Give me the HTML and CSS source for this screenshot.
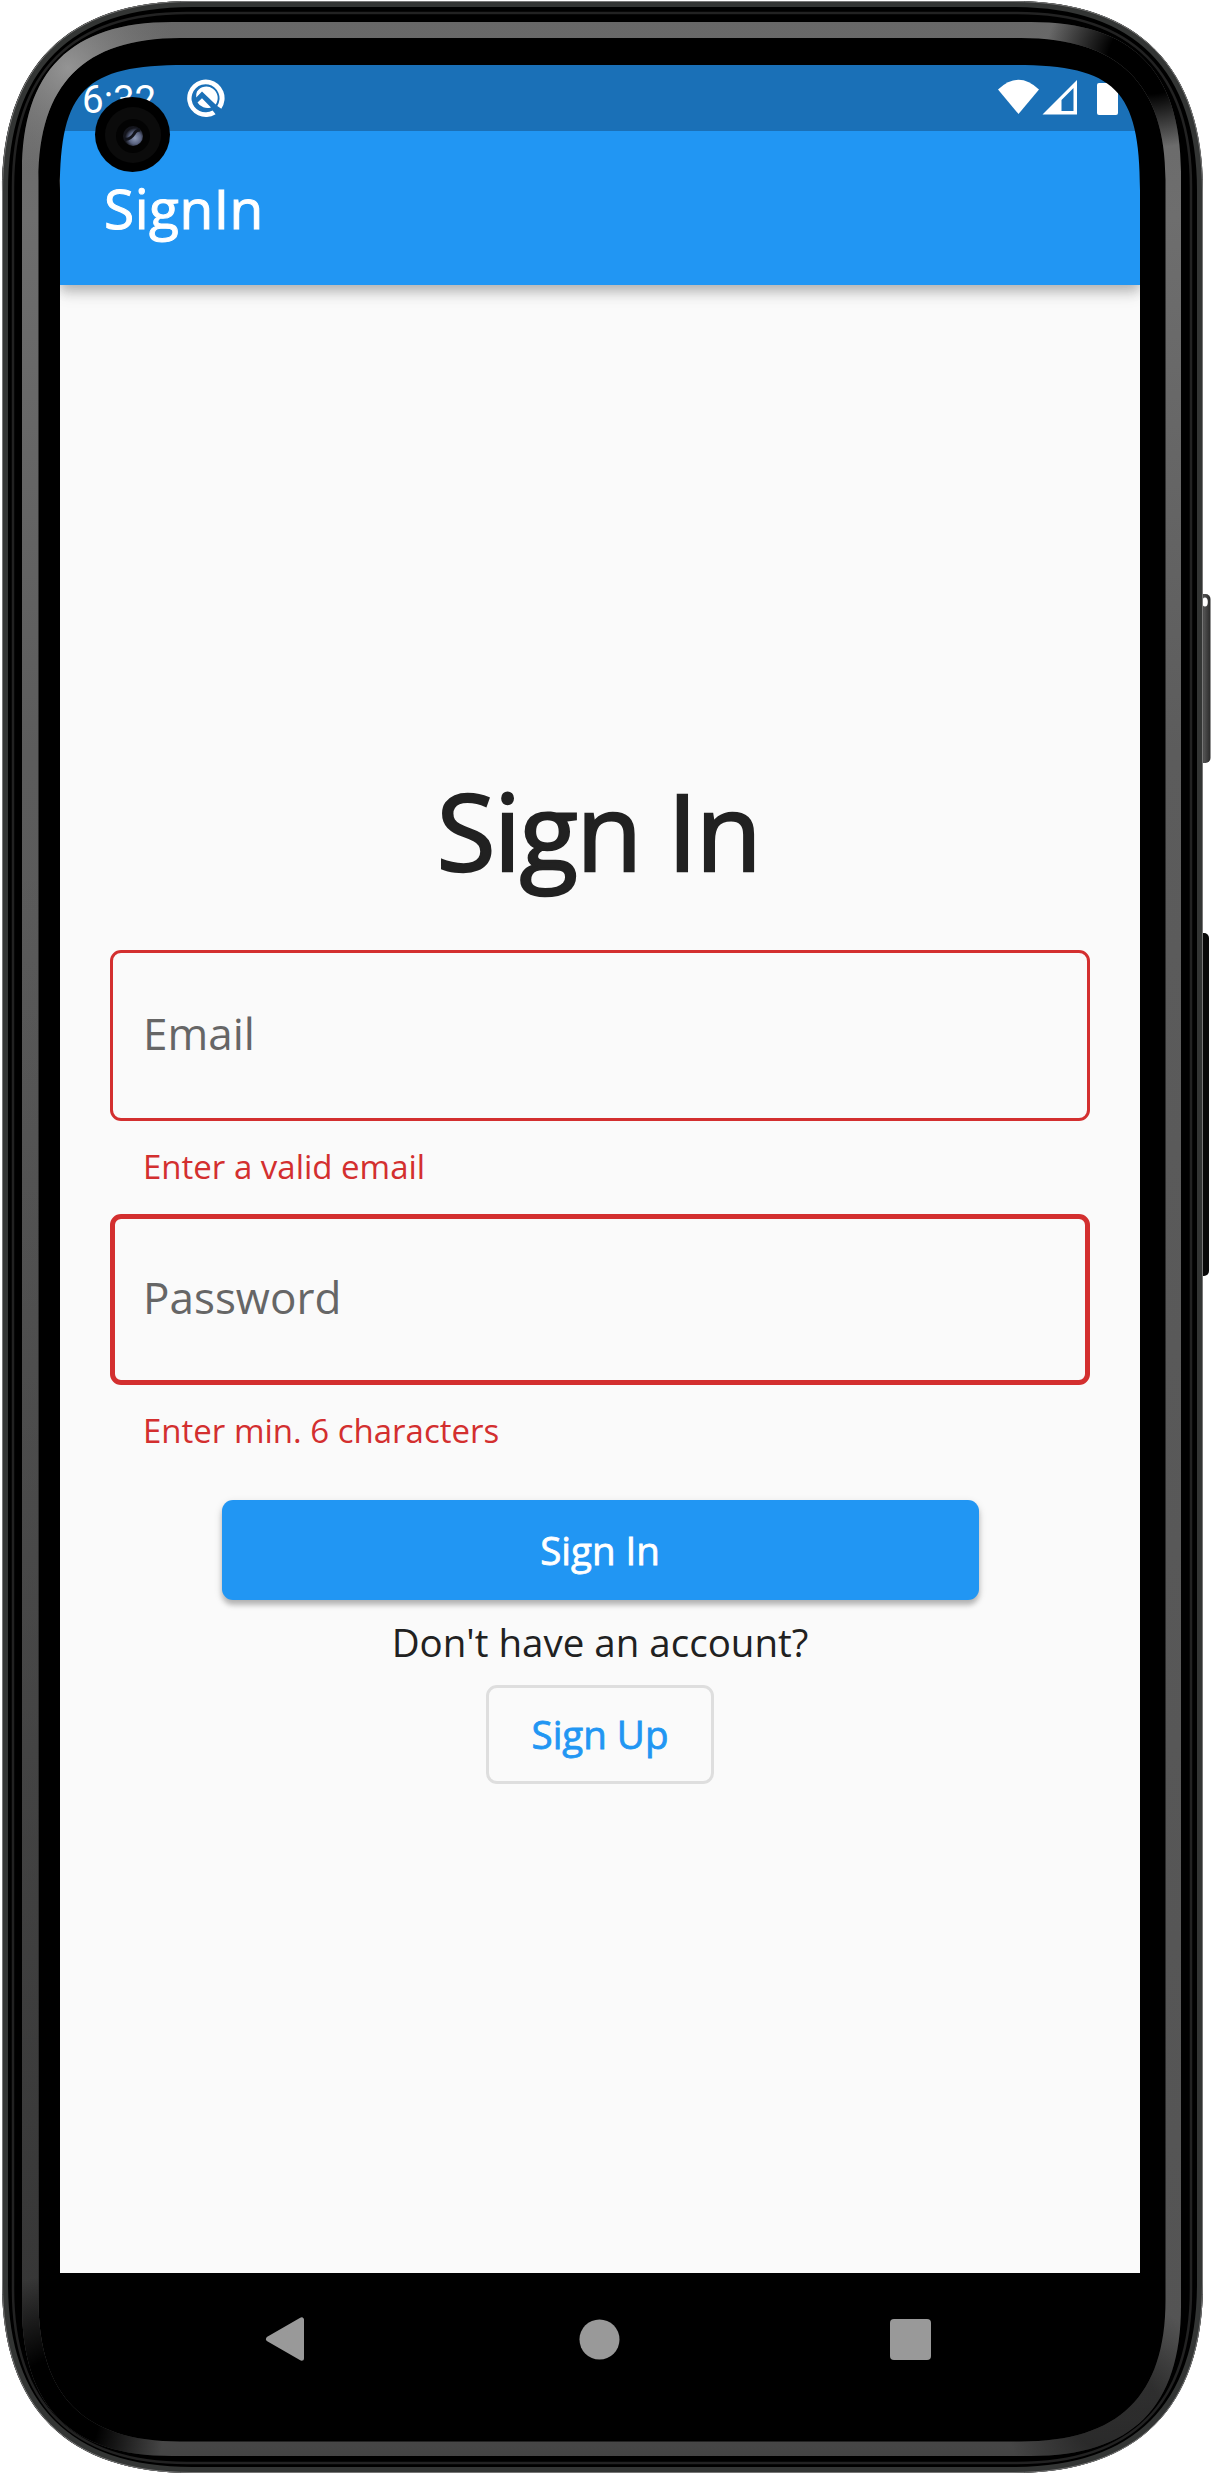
FILE: index.html
```html
<!DOCTYPE html>
<html lang="en">
<head>
<meta charset="utf-8">
<title>SignIn</title>
<link rel="stylesheet" href="styles.css">
</head>
<body>
<div class="phone">
  <div class="screen">
    <header class="status-bar">
      <span class="clock">6:32</span>
      <svg class="q-icon" width="38" height="38" viewBox="0 0 38 38">
        <path d="M28.600 35.200A18.700 18.700 0 1 1 34.300 29.800L30.300 26.900A14 14 0 1 0 25.600 31.400Z" fill="#fff"/>
        <path d="M10 12.400A11.400 11.400 0 0 1 28.600 25.600L15 12.600L9.200 18.400A11 11 0 0 1 10 12.400ZM10.500 23.400L15 19.200L24 28.400A11.400 11.400 0 0 1 10.500 23.400Z" fill="#fff"/>
      </svg>
      <svg class="status-icons" width="122" height="37" viewBox="0 0 122 37">
        <path d="M0 10.500Q20.500-9 41 10.500L20.500 35Z" fill="#fff"/>
        <path fill-rule="evenodd" d="M44.500 35.500L79 1V35.500ZM63.500 21V32H75.500V9Z" fill="#fff"/>
        <rect x="99" y="4" width="21" height="32" rx="2" fill="#fff"/>
      </svg>
    </header>
    <div class="app-bar">SignIn</div>
    <main class="page">
      <h1 class="title">Sign In</h1>
      <form class="form">
        <input class="field" type="text" placeholder="Email">
        <p class="error">Enter a valid email</p>
        <input class="field field-focused" type="password" placeholder="Password">
        <p class="error">Enter min. 6 characters</p>
        <button class="submit" type="button">Sign In</button>
      </form>
      <p class="question">Don't have an account?</p>
      <button class="sign-up" type="button">Sign Up</button>
    </main>
    <nav class="nav-bar">
      <svg width="40" height="46" viewBox="0 0 40 46"><path d="M3.500 23L36.500 3.800V42.200Z" fill="#999" stroke="#999" stroke-width="5" stroke-linejoin="round"/></svg>
      <svg class="home" width="41" height="41" viewBox="0 0 41 41"><circle cx="20.500" cy="20.500" r="20" fill="#999"/></svg>
      <svg width="41" height="41" viewBox="0 0 41 41"><rect width="41" height="41" rx="4" fill="#999"/></svg>
    </nav>
  </div>

  <svg class="bezel" width="1211" height="2474" viewBox="0 0 1211 2474">
    <defs>
      <linearGradient id="rim" x1="0" y1="0" x2="0" y2="1">
        <stop offset="0" stop-color="#686868"/><stop offset=".08" stop-color="#6e6e6e"/>
        <stop offset=".3" stop-color="#5c5c5c"/><stop offset=".95" stop-color="#545454"/><stop offset="1" stop-color="#444"/>
      </linearGradient>
      <linearGradient id="leftShade" x1="0" y1="0" x2="0" y2="1">
        <stop offset=".3" stop-color="#333" stop-opacity="0"/><stop offset="1" stop-color="#303030" stop-opacity=".9"/>
      </linearGradient>
      <radialGradient id="light"><stop offset="0" stop-color="#999" stop-opacity=".9"/><stop offset="1" stop-color="#777" stop-opacity="0"/></radialGradient>
      <radialGradient id="dark"><stop offset=".4" stop-color="#000"/><stop offset="1" stop-color="#000" stop-opacity="0"/></radialGradient>
      <radialGradient id="lens" cx=".6" cy=".6"><stop offset="0" stop-color="#8f9bb8"/><stop offset=".6" stop-color="#5a6380"/><stop offset="1" stop-color="#14151c"/></radialGradient>
      <linearGradient id="key" x1="0" x2="1"><stop offset="0" stop-color="#383838"/><stop offset=".5" stop-color="#505050"/><stop offset="1" stop-color="#2a2a2a"/></linearGradient>
      <clipPath id="rimClip">
        <path clip-rule="evenodd" d="M22 172C22 71 71 22 172 22H1031C1132 22 1181 71 1181 172V2306C1181 2407 1132 2456 1031 2456H172C71 2456 22 2407 22 2306ZM38.500 180C38.500 84 84 38 180 38H1021C1119 38 1165.500 84 1165.500 180V2300C1165.500 2396 1119 2441.500 1021 2441.500H180C84 2441.500 38.500 2396 38.500 2300Z"/>
      </clipPath>
    </defs>
    <rect x="1198" y="594" width="12.500" height="169" rx="5" fill="url(#key)"/>
    <ellipse cx="1205" cy="602" rx="2.800" ry="4.500" fill="#fff"/>
    <rect x="1198" y="933" width="11" height="343" rx="5" fill="#080808"/>
    <path fill-rule="evenodd" d="M2 191C2 66 67 1 192 1H1013C1138 1 1203 66 1203 191V2283C1203 2408 1138 2473 1013 2473H192C67 2473 2 2408 2 2283ZM60 190C60 90 85 65 185 65H1015C1115 65 1140 90 1140 190V2404H60Z"/>
    <g fill="none">
      <path d="M5 191C5 68 69 4 192 4H1013C1136 4 1200 68 1200 191V2283C1200 2406 1136 2470 1013 2470H192C69 2470 5 2406 5 2283Z" stroke="#333534" stroke-width="6"/>
      <path d="M2.500 191C2.500 66.500 67.500 1.500 192 1.500H1013C1138 1.500 1202.500 66.500 1202.500 191V2283C1202.500 2408 1138 2472.500 1013 2472.500H192C67.500 2472.500 2.500 2408 2.500 2283Z" stroke="#777"/>
      <path d="M13 187C13 72 72 13 187 13H1017C1132 13 1191 72 1191 187V2289C1191 2404 1132 2463 1017 2463H187C72 2463 13 2404 13 2289Z" stroke="#222" stroke-width="2.500"/>
    </g>
    <g clip-path="url(#rimClip)">
      <rect x="20" y="20" width="1165" height="2440" fill="url(#rim)"/>
      <rect x="20" y="200" width="60" height="2240" fill="url(#leftShade)"/>
      <ellipse cx="68" cy="68" rx="110" ry="110" fill="url(#light)"/>
      <ellipse cx="1150" cy="58" rx="105" ry="90" fill="url(#dark)"/>
      <ellipse cx="55" cy="2415" rx="110" ry="140" fill="url(#dark)"/>
      <ellipse cx="1115" cy="2410" rx="110" ry="110" fill="url(#dark)" opacity=".4"/>
    </g>
    <circle cx="132.500" cy="134.500" r="37.500"/>
    <circle cx="133" cy="135" r="28" fill="#0b0b0b"/>
    <circle cx="133" cy="136" r="17" fill="#030303"/>
    <circle cx="133" cy="136" r="10" fill="url(#lens)"/>
    <path d="M125 139Q130 140 134 134Q136 130 140 130" fill="none" stroke="#11131b" stroke-width="3"/>
  </svg>
</div>
</body>
</html>
```
FILE: styles.css
```css
* { box-sizing: border-box; }

body {
  margin: 0;
  background: #fff;
  font-family: "Open Sans", "Noto Sans", sans-serif;
}

p, h1 { margin: 0; }

input, button { font-family: inherit; }

.phone {
  position: relative;
  width: 1211px;
  height: 2474px;
  padding: 65px 71px 0 60px;
  overflow: hidden;
}

/* The frame lies over the screen and rounds its corners. */
.bezel {
  position: absolute;
  top: 0;
  left: 0;
  pointer-events: none;
}

.screen {
  display: flex;
  flex-direction: column;
  height: 2340px;
}

.status-bar {
  display: flex;
  align-items: flex-start;
  flex: none;
  height: 66px;
  padding: 14px 20px 0 22px;
  background: #1a70b7;
  color: #fff;
}

.clock {
  margin-top: -2px;
  width: 105px;
  font: 400 38.5px/45px Roboto, sans-serif;
}

.status-icons { margin-left: auto; }

.app-bar {
  position: relative;
  flex: none;
  height: 154px;
  padding-left: 44px;
  background: #2196f3;
  box-shadow: 0 5px 11px rgba(0, 0, 0, .2), 0 11px 14px rgba(0, 0, 0, .08), 0 3px 20px rgba(0, 0, 0, .06);
  clip-path: inset(0 0 -40px 0);
  color: #fff;
  font-size: 55px;
  font-weight: 400;
  line-height: 154px;
  letter-spacing: .5px;
  -webkit-text-stroke: 1px #fff;
}

.page {
  display: flex;
  flex-direction: column;
  align-items: center;
  flex: none;
  height: 1988px;
  padding: 470px 50px 0;
  background: #fafafa;
  color: #212121;
}

.title {
  height: 150px;
  margin-bottom: 45px;
  padding-right: 3px;
  font-size: 107px;
  font-weight: 400;
  line-height: 150px;
  letter-spacing: -1.3px;
  -webkit-text-stroke: 2.4px #212121;
}

.form {
  display: flex;
  flex-direction: column;
  width: 980px;
}

.field {
  height: 171px;
  padding: 0 30px 5px;
  border: 3px solid #d32f2f;
  border-radius: 11px;
  background: transparent;
  outline: none;
  font-size: 44px;
}

.field-focused {
  padding: 0 28px 5px;
  border-width: 5.5px;
}

.field::placeholder { color: #666; opacity: 1; }

.error {
  height: 45px;
  margin: 23px 0 25px 33px;
  color: #d32f2f;
  font-size: 33px;
  line-height: 45px;
}

.submit {
  align-self: center;
  width: 757px;
  height: 100px;
  margin-top: 22px;
  padding: 0;
  border: 0;
  border-radius: 11px;
  background: #2196f3;
  box-shadow: 0 5px 5px rgba(0, 0, 0, .2), 0 3px 9px rgba(0, 0, 0, .14);
  color: #fff;
  font-size: 38.5px;
  -webkit-text-stroke: .8px #fff;
}

.question {
  margin: 16px 0;
  font-size: 38.5px;
  line-height: 53px;
}

.sign-up {
  width: 228px;
  height: 99px;
  padding: 0 0 2px;
  border: 3px solid #dedede;
  border-radius: 11px;
  background: transparent;
  color: #2196f3;
  font-size: 38.5px;
  -webkit-text-stroke: .8px #2196f3;
}

.nav-bar {
  display: flex;
  justify-content: space-between;
  align-items: center;
  flex: none;
  height: 132px;
  padding: 0 209px 0 205px;
  background: #000;
}

.home { margin-left: 4px; }
```
